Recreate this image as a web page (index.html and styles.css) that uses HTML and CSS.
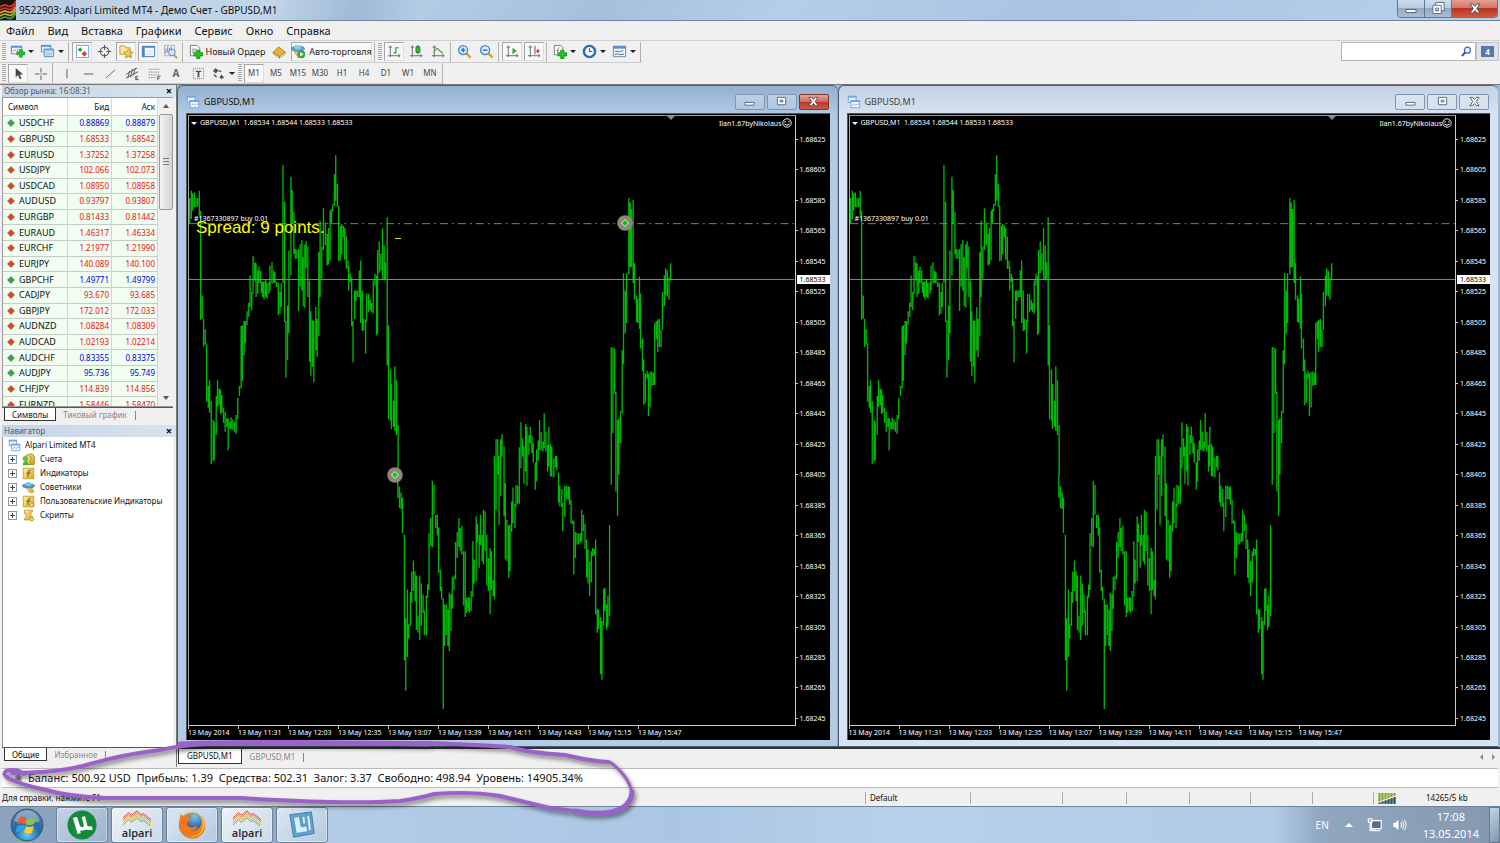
FILE: index.html
```html
<!DOCTYPE html>
<html lang="ru">
<head>
<meta charset="utf-8">
<title>9522903: Alpari Limited MT4</title>
<link rel="stylesheet" href="styles.css">
</head>
<body>
<svg class="sprite" aria-hidden="true">
  <defs>
    <linearGradient id="gold" x1="0" y1="0" x2="1" y2="1"><stop offset="0" stop-color="#fff3a0"/><stop offset="1" stop-color="#d9a520"/></linearGradient>
    <radialGradient id="orbfill" cx=".5" cy=".8" r=".8"><stop offset="0" stop-color="#5fd0f4"/><stop offset=".5" stop-color="#236aa5"/><stop offset="1" stop-color="#5c7f9f"/></radialGradient>
    <radialGradient id="foxfill" cx=".6" cy=".2" r=".9"><stop offset="0" stop-color="#ffd84a"/><stop offset=".5" stop-color="#f58a1c"/><stop offset="1" stop-color="#d2401a"/></radialGradient>
    <radialGradient id="globe" cx=".6" cy=".2" r=".8"><stop offset="0" stop-color="#7cc4ec"/><stop offset="1" stop-color="#1f4f9a"/></radialGradient>
  </defs>
  <symbol id="plus" viewBox="0 0 9 9"><path d="M3 0h3v3h3v3H6v3H3V6H0V3h3z" fill="#23c423" stroke="#0b7d12" stroke-width=".7"/></symbol>
  <symbol id="i-new" viewBox="0 0 16 16"><path d="M1.500 2.500h11v8h-11z" fill="#eaf3fc" stroke="#5b86b5"/><path d="M1 2h12v2H1z" fill="#5b93cc"/><path d="M3 8l2-2 2 2 2-3" fill="none" stroke="#7d9dbf"/><use href="#plus" x="7" y="5.500" width="9" height="9"/></symbol>
  <symbol id="i-profiles" viewBox="0 0 16 16"><path d="M1.500 1.500h10v7h-10z" fill="#e9f3fd" stroke="#4f86c4"/><path d="M1 1h11v2H1z" fill="#5b97d8"/><path d="M4.500 5.500h10v8h-10z" fill="#d5e7fa" stroke="#4f86c4"/><path d="M4 5h11v2H4z" fill="#6ba3de"/><path d="M6 9.500h7M6 11.500h7" stroke="#9ab6d6"/></symbol>
  <symbol id="i-market" viewBox="0 0 16 16"><path d="M1.500 1.500h13v13h-13z" fill="#fff" stroke="#6aa4e0"/><path d="M5.500 3.500L8 6 5.500 8.500 3 6z" fill="#28a428"/><path d="M10 7.500l3 3-3 3-3-3z" fill="#d8412e"/></symbol>
  <symbol id="i-cross" viewBox="0 0 16 16"><circle cx="8" cy="8" r="4.500" fill="none" stroke="#555" stroke-width="1.200"/><path d="M8 1v5M8 10v5M1 8h5M10 8h5" stroke="#555" stroke-width="1.200"/></symbol>
  <symbol id="i-nav" viewBox="0 0 16 16"><path d="M1 2h5l1 2h5v7H1z" fill="#ffe9a0" stroke="#c49b3c"/><path d="M10 5l1.700 3.300 3.500.5-2.600 2.500.6 3.600-3.200-1.700-3.200 1.700.6-3.600-2.600-2.500 3.500-.5z" fill="url(#gold)" stroke="#b98a14" stroke-width=".8"/></symbol>
  <symbol id="i-term" viewBox="0 0 16 16"><path d="M1.500 2.500h13v11h-13z" fill="#f3f8ff" stroke="#3f74bd"/><path d="M1 2h14v2H1zM1 4h3v10H1z" fill="#4e85cc"/><path d="M6 7.500h7M6 10.500h7" stroke="#cddcf0"/></symbol>
  <symbol id="i-test" viewBox="0 0 16 16"><path d="M1.500 1.500h11v11h-11z" fill="#e9eef5" stroke="#a4b3c5"/><path d="M3 10V5M5 9V3M7 8V4M9 9V3" stroke="#5e84b4"/><circle cx="9.500" cy="9" r="3.500" fill="#cfe6fb" fill-opacity=".8" stroke="#5c88b6"/><path d="M12 12l3 3" stroke="#d39b2e" stroke-width="2"/></symbol>
  <symbol id="i-order" viewBox="0 0 16 16"><path d="M2.500 1.500h7l3 3v8h-10z" fill="#fff" stroke="#777"/><path d="M4 5.500h5M4 7.500h6M4 9.500h3" stroke="#888"/><use href="#plus" x="6" y="6" width="10" height="10"/></symbol>
  <symbol id="i-book" viewBox="0 0 16 16"><path d="M1 9l6-6 7 5.500-6 5z" fill="#e9b13a" stroke="#a56f12" stroke-width=".8"/><path d="M1 9l1 2 6 4v-1.800zM8 13.200V15l6-4.500v-2z" fill="#fff0bd" stroke="#a56f12" stroke-width=".7"/></symbol>
  <symbol id="i-auto" viewBox="0 0 16 16"><path d="M2 6l6 9 6-7z" fill="#f2cf4b" stroke="#b68c1f" stroke-width=".6"/><ellipse cx="7.500" cy="5" rx="7" ry="2.800" fill="#5ba4d8" stroke="#2f74a8" stroke-width=".6"/><ellipse cx="7" cy="3.500" rx="3.500" ry="2.500" fill="#8fc9ef"/><circle cx="11" cy="11" r="4.200" fill="#2eab35"/><path d="M9.500 8.600v4.800l4-2.400z" fill="#fff"/></symbol>
  <symbol id="axes" viewBox="0 0 16 16"><path d="M3.500 2v12M1 12.500h13M2 4l1.500-2L5 4M12 11l2 1.500-2 1.500" fill="none" stroke="#666"/></symbol>
  <symbol id="i-bars" viewBox="0 0 16 16"><use href="#axes"/><path d="M9.500 3.500v6.500M9.500 9.500H7M9.500 4h3" stroke="#219a32" stroke-width="1.200"/></symbol>
  <symbol id="i-candle" viewBox="0 0 16 16"><use href="#axes"/><path d="M9.500 1v10" stroke="#14751f"/><path d="M7.500 3h4v6h-4z" fill="#2cc43a" stroke="#14751f"/></symbol>
  <symbol id="i-line" viewBox="0 0 16 16"><use href="#axes"/><path d="M3 9c2-5 4-5 6-2l4 3" fill="none" stroke="#2aa33a" stroke-width="1.200"/></symbol>
  <symbol id="lens" viewBox="0 0 16 16"><path d="M10 10l4.500 4.500" stroke="#d8a328" stroke-width="2.600"/><circle cx="6.500" cy="6.500" r="4.800" fill="#d9edfc" stroke="#3f86ce" stroke-width="1.400"/></symbol>
  <symbol id="i-zin" viewBox="0 0 16 16"><use href="#lens"/><path d="M4 6.500h5M6.500 4v5" stroke="#2566b5" stroke-width="1.400"/></symbol>
  <symbol id="i-zout" viewBox="0 0 16 16"><use href="#lens"/><path d="M4 6.500h5" stroke="#2566b5" stroke-width="1.400"/></symbol>
  <symbol id="i-scroll" viewBox="0 0 16 16"><use href="#axes"/><path d="M8 4l4.500 3.500L8 11z" fill="#26a637"/></symbol>
  <symbol id="i-shift" viewBox="0 0 16 16"><use href="#axes"/><path d="M8.500 2v9" stroke="#555"/><path d="M14 7.500h-3M12 5.500L10 7.500l2 2z" stroke="#c33" fill="#c33" stroke-width=".8"/></symbol>
  <symbol id="i-ind" viewBox="0 0 16 16"><path d="M2.500 1.500h7l2 2v8h-9z" fill="#fff" stroke="#777"/><path d="M6 10V6q0-2 2-2M4.500 7h3" fill="none" stroke="#888"/><use href="#plus" x="6" y="6" width="10" height="10"/></symbol>
  <symbol id="i-clock" viewBox="0 0 16 16"><circle cx="8" cy="8" r="6" fill="#f4faff" stroke="#2c6cb8" stroke-width="2.600"/><path d="M8 4.500V8h3" fill="none" stroke="#555" stroke-width="1.200"/></symbol>
  <symbol id="i-tpl" viewBox="0 0 16 16"><path d="M1.500 2.500h13v11h-13z" fill="#f5f9ff" stroke="#5987ba"/><path d="M1 2h14v3H1z" fill="#5b93cf"/><path d="M3 8.500l3-1 2 1 4-1.500M3 11.500l3-1 3 1 4-1" fill="none" stroke="#557"/></symbol>
  <symbol id="i-cursor" viewBox="0 0 16 16"><path d="M5 2v10l2.500-2.300L9.500 14l1.800-.9-2-4H13z" fill="#444"/></symbol>
  <symbol id="i-hair" viewBox="0 0 16 16"><path d="M8.500 2v5M8.500 10v5M2 8.500h5M10 8.500h5M8 8.500h1" stroke="#555"/></symbol>
  <symbol id="i-vl" viewBox="0 0 16 16"><path d="M8.500 3v10" stroke="#555"/></symbol>
  <symbol id="i-hl" viewBox="0 0 16 16"><path d="M3 8.500h10" stroke="#555"/></symbol>
  <symbol id="i-dl" viewBox="0 0 16 16"><path d="M3 13L13 4" stroke="#666"/></symbol>
  <symbol id="i-chan" viewBox="0 0 16 16"><path d="M1 9L13 2M1 13L14 6M3 13l2-8M6 12l2-9M9 10l2-8M11.500 15v-4h2.500M11.500 13h2M11.500 14.500h3" stroke="#555" fill="none"/></symbol>
  <symbol id="i-fibo" viewBox="0 0 16 16"><path d="M2 3.500h12M2 6.500h12M2 9.500h12M2 12.500h8" stroke="#666" stroke-dasharray="1 1"/><path d="M11.500 15v-4h3M11.500 13h2" stroke="#555" fill="none"/></symbol>
  <symbol id="i-label" viewBox="0 0 16 16"><path d="M2.500 2.500h11v11h-11z" fill="none" stroke="#777" stroke-dasharray="1 1"/><path d="M5 5h6v1.500H9V12H7V6.500H5z" fill="#555"/></symbol>
  <symbol id="i-arrows" viewBox="0 0 16 16"><path d="M5 2l3 3-3 3-3-3zM11 9l3 3-3 2-2-2z" fill="#555"/><path d="M8 5l3 1M6 12l-3-3" stroke="#555" stroke-width="1.400"/></symbol>
  <symbol id="i-arrow" viewBox="0 0 10 10"><path d="M5 .6L9.400 5 5 9.400.6 5z" fill="currentColor" stroke="#3b3b1c" stroke-opacity=".5" stroke-width=".9"/></symbol>
  <symbol id="i-child" viewBox="0 0 16 16"><path d="M1.500 1.500h9v7h-9z" fill="#e6f1fd" stroke="#6b9fdc"/><path d="M1 1h10v2H1z" fill="#6ba4e2"/><path d="M4.500 6.500h10v8h-10z" fill="#f5faff" stroke="#6b9fdc"/><path d="M4 6h11v2H4z" fill="#6ba4e2"/><path d="M6 12l2-2 2 2 2-2 2 1" fill="none" stroke="#7da6d6"/></symbol>
  <symbol id="i-acc" viewBox="0 0 16 16"><path d="M5 3l7-2 3 3v10H5z" fill="url(#gold)" stroke="#8d7413"/><path d="M9 4q4 0 2 4t2 5" fill="none" stroke="#a5841c"/><circle cx="4" cy="7" r="2.800" fill="#6fc43c" stroke="#3e8420" stroke-width=".6"/><path d="M1 15q0-5 3.500-5T8 15z" fill="#55b52c"/></symbol>
  <symbol id="i-f" viewBox="0 0 16 16"><path d="M1.500 1.500h13v13h-13z" fill="url(#gold)" stroke="#c09328"/><path d="M10.500 4Q8 3 7.700 7L7 12M5.500 7.500h5" fill="none" stroke="#6a5418" stroke-width="1.200"/></symbol>
  <symbol id="i-hat" viewBox="0 0 16 16"><path d="M3 7l6 8 5-7z" fill="#f2d05c"/><ellipse cx="8" cy="6" rx="7.500" ry="2.700" fill="#4e9bd0" stroke="#2a6c9e" stroke-width=".7"/><path d="M4 5q1-4 4-4t4 4q-4 2-8 0z" fill="#83c2ea"/><path d="M12 9.500l3 3-3 3-3-3z" fill="#e7b93a" stroke="#a87d17" stroke-width=".7"/></symbol>
  <symbol id="i-fc" viewBox="0 0 16 16"><use href="#i-f"/><path d="M12 9.500l3 3-3 3-3-3z" fill="#f3d264" stroke="#a87d17" stroke-width=".8"/></symbol>
  <symbol id="i-script" viewBox="0 0 16 16"><path d="M3 1.500h10v2h-2v6h2v4H3v-2h2v-6H3z" fill="url(#gold)" stroke="#c09328"/><path d="M12 9.500l3 3-3 3-3-3z" fill="#f3d264" stroke="#a87d17" stroke-width=".8"/></symbol>
  <symbol id="w-min" viewBox="0 0 16 12"><path d="M3 7h10v3H3z" fill="#fff" stroke="#566678" stroke-width="1"/></symbol>
  <symbol id="w-max" viewBox="0 0 16 12"><path d="M3.500 1.500h9v8h-9zM6.500 4.500v2h3v-2z" fill="#fff" fill-rule="evenodd" stroke="#566678"/></symbol>
  <symbol id="w-res" viewBox="0 0 16 14"><path d="M5.500.5h9v9h-9z" fill="#fff" stroke="#566678"/><path d="M2.500 3.500h9v9h-9zM5.500 6.500v3h3v-3z" fill="#fff" fill-rule="evenodd" stroke="#566678"/></symbol>
  <symbol id="w-x" viewBox="0 0 16 12"><path d="M3 1.500h3l2 2.500 2-2.500h3L9.700 6l3.300 4.500h-3L8 8l-2 2.500H3L6.300 6z" fill="#fff" stroke="#4c5666"/></symbol>
  <symbol id="i-alpari" viewBox="0 0 32 18" preserveAspectRatio="none"><g fill="none" stroke-width="1"><path d="M1 9l6-6 3 3 6-5 4 4 3-1 8 7" stroke="#d23c2c"/><path d="M1 11l6-6 3 3 6-5 4 4 3-1 8 7" stroke="#e8752e"/><path d="M1 13l6-6 3 3 6-5 4 4 3-1 8 7" stroke="#edb13a"/><path d="M1 15l6-6 3 3 6-5 4 4 3-1 8 7" stroke="#c3c83a"/><path d="M1 17l6-6 3 3 6-5 4 4 3-1 8 7" stroke="#7fae3a"/></g></symbol>
  <symbol id="i-deal" viewBox="0 0 16 16"><circle cx="8" cy="8" r="7.800" fill="#8f857b"/><path d="M8 4.500L11.500 8 8 11.500 4.500 8z" fill="#12c212" stroke="#c8ffc0"/></symbol>
  <symbol id="bars" viewBox="0 0 1824 1833" preserveAspectRatio="none">
    <g fill="none" stroke="#00b808" stroke-width="4">
      <path transform="translate(-6 -15)" d="M8 262V340M13 240V325M17 248V300M22 245V290M27 262V290M32 262V288M37 240V315M41 300V628M46 555V625M50 625V710M55 657V703M59 700V875M64 828V893M68 810V908M73 873V1063M79 930V1055M82 935V1050M88 858V975M92 810V890M97 835V885M101 838V912M105 855V908M110 893V938M115 905V965M120 925V952M124 925V1022M129 935V958M133 922V958M138 928V960M143 935V965M148 915V972M153 863V928M158 828V858M163 647V835M167 645V812M172 632V735M176 632V700M181 603V645M186 577V620M190 495V590M195 545V600M199 436V550M204 455V510M208 458V560M213 480V550M217 468V518M222 480V518M224 515V548M228 515V560M232 512V568M237 507V560M241 518V565M247 515V550M250 465V540M256 455V520M261 480V518M265 485V518M270 515V530M275 518V615M280 545V610M284 518V590M289 162V518M294 272V635M298 632V803M303 585V750M307 420V668M313 198V495M317 238V340M322 305V430M326 415V445M331 418V445M336 415V602M341 400V528M346 388V540M350 440V588M355 402V592M359 392V472M364 408V560M369 510V755M373 603V797M378 630V770M382 632V817M388 590V720M392 625V740M397 425V678M401 330V560M406 408V505M411 293V418M417 335V405M422 370V465M426 352V462M431 300V450M435 295V340M439 280V302M444 190V285M448 133V270M453 220V288M457 285V452M462 345V450M466 340V430M471 345V380M475 352V448M480 378V475M485 450V475M487 468V540M492 490V515M496 500V648M500 632V757M505 540V625M509 540V572M514 540V560M519 480V560M523 450V638M528 540V662M532 625V660M538 628V730M541 550V635M547 550V605M552 568V600M556 578V605M561 510V610M566 490V525M571 495V675M574 418V670M579 393V488M584 428V480M589 353V508M594 405V510M598 455V508M603 320V765M607 645V928M613 778V932M616 822V958M622 872V950M626 768V962M631 810V975M636 945V1095"/>
      <path transform="translate(606 795)" d="M23 284V355M28 320V385M33 338V388M37 355V460M43 465V843M47 717V935M52 630V833M56 735V778M61 638V740M65 577V670M70 543V635M75 575V665M79 588V752M84 710V760M89 588V782M94 612V740M99 645V700M103 693V768M109 648V768M113 615V655M117 460V632M122 415V500M127 303V503M132 315V405M137 405V445M142 405V468M146 443V580M151 570V635M155 622V660M160 657V990M164 675V800M169 675V768M174 692V800M178 640V815M183 645V755M187 592V688M192 588V632M197 487V600M202 457V535M207 415V502M211 445V515M216 438V525M221 515V678M226 515V713M230 655V700M235 653V695M239 655V700M244 635V695M249 485V652M253 540V612M259 410V605M263 432V487M268 465V565M272 405V498M277 465V545M281 390V555M286 395V515M291 465V618M296 535V635M301 505V705M305 515V632M310 602V650M314 228V660M319 178V390M324 178V285M328 228V435M333 178V348M337 163V230M343 200V410M347 310V540M352 420V545M357 437V595M361 435V575M366 365V458M370 323V430M376 373V445M379 315V380M384 318V372M389 202V372M394 127V265M399 175V230M403 200V312M408 132V275M412 140V318M418 165V225M422 140V190M427 168V220M431 190V248M437 248V330M441 208V305M446 182V243M450 120V210M455 155V212M460 185V215M464 100V205M469 155V215M474 195V275M478 140V260M483 192V290M487 200V290M493 235V293M498 228V262M502 228V272M507 278V368M511 318V380M517 328V382M520 370V455M526 318V412M531 318V358M536 320V360M540 320V375M545 360V432M550 422V433M553 425V585M558 457V535M563 460V495M568 462V495M573 460V488M577 390V485M582 405V455M587 432V508M592 480V595M596 510V612M601 545V650M606 515V608M610 505V530M615 508V528M619 480V705M624 688V760M628 692V750M634 713V885M638 725V902M643 628V738M647 625V695M652 675V752M656 648V742M661 437V710M666 -100V315M671 -98V160M676 -95V40M680 35V335M685 120V408M689 115V285M694 92V190"/>
      <path transform="translate(1176 -75)" d="M129 780V970M133 548V822M138 600V730M142 548V698M149 322V552M153 335V530M157 355V530M162 327V578M166 518V628M172 615V695M176 625V698M181 558V715M184 610V775M190 745V843M194 808V945M199 850V938M204 842V865M208 850V978M213 845V952M218 843V888M223 848V885M227 697V885M232 692V748M236 688V785M241 685V770M246 718V770M250 605V718M256 555V648M260 533V615M265 540V618M270 560V628M275 518V570"/>
    </g>
    <path d="M0 324H1824" stroke="#2fb336" stroke-width="3" stroke-dasharray="24 12 6 12"/>
    <path d="M0 492H1824" stroke="#808898" stroke-width="3"/>
  </symbol>
</svg>

<header class="titlebar">
  <svg class="app-logo" viewBox="0 0 16 20" preserveAspectRatio="none"><path d="M0 0h16v20H0z" fill="#1c120c"/><g fill="none" stroke-width="1.700"><path d="M0 7q4-3 8-1t8-5" stroke="#d53a26"/><path d="M0 10q4-3 8-1t8-5" stroke="#c9392a"/><path d="M0 13q4-3 8-1t8-5" stroke="#e2a13a"/><path d="M0 16q4-3 8-1t8-5" stroke="#a3b93a"/><path d="M0 19q4-3 8-1t8-5" stroke="#4e9a34"/></g></svg>
  <h1 class="title">9522903: Alpari Limited MT4 - Демо Счет - GBPUSD,M1</h1>
  <div class="win-controls">
    <button class="wc" aria-label="Свернуть"><svg><use href="#w-min"/></svg></button>
    <button class="wc" aria-label="Восстановить"><svg><use href="#w-res"/></svg></button>
    <button class="wc wc-close" aria-label="Закрыть"><svg><use href="#w-x"/></svg></button>
  </div>
</header>

<nav class="menu">
  <button>Файл</button><button>Вид</button><button>Вставка</button><button>Графики</button><button>Сервис</button><button>Окно</button><button>Справка</button>
</nav>

<div class="toolrow">
  <div class="toolbar">
    <i class="grip"></i>
    <button class="tb drop" aria-label="Новый график"><svg><use href="#i-new"/></svg></button>
    <button class="tb drop" aria-label="Профили"><svg><use href="#i-profiles"/></svg></button>
    <i class="sep"></i>
    <button class="tb on" aria-label="Обзор рынка"><svg><use href="#i-market"/></svg></button>
    <button class="tb" aria-label="Окно данных"><svg><use href="#i-cross"/></svg></button>
    <button class="tb on" aria-label="Навигатор"><svg><use href="#i-nav"/></svg></button>
    <button class="tb on" aria-label="Терминал"><svg><use href="#i-term"/></svg></button>
    <button class="tb" aria-label="Тестер"><svg><use href="#i-test"/></svg></button>
    <i class="sep"></i>
    <button class="tb wide"><svg><use href="#i-order"/></svg>Новый Ордер</button>
    <button class="tb" aria-label="Редактор"><svg><use href="#i-book"/></svg></button>
    <button class="tb wide on"><svg><use href="#i-auto"/></svg>Авто-торговля</button>
    <i class="sep"></i>
    <i class="grip"></i>
    <button class="tb on" aria-label="Бары"><svg><use href="#i-bars"/></svg></button>
    <button class="tb" aria-label="Свечи"><svg><use href="#i-candle"/></svg></button>
    <button class="tb" aria-label="Линия"><svg><use href="#i-line"/></svg></button>
    <i class="sep"></i>
    <button class="tb" aria-label="Увеличить"><svg><use href="#i-zin"/></svg></button>
    <button class="tb" aria-label="Уменьшить"><svg><use href="#i-zout"/></svg></button>
    <i class="sep"></i>
    <button class="tb on" aria-label="Автопрокрутка"><svg><use href="#i-scroll"/></svg></button>
    <button class="tb on" aria-label="Сдвиг графика"><svg><use href="#i-shift"/></svg></button>
    <i class="sep"></i>
    <button class="tb drop" aria-label="Индикаторы"><svg><use href="#i-ind"/></svg></button>
    <button class="tb drop" aria-label="Периоды"><svg><use href="#i-clock"/></svg></button>
    <button class="tb drop" aria-label="Шаблоны"><svg><use href="#i-tpl"/></svg></button>
    <i class="sep"></i>
  </div>
  <div class="search">
    <input type="text" aria-label="Поиск">
    <svg class="search-icon" viewBox="0 0 12 12"><circle cx="7" cy="4.500" r="3.300" fill="#eef4ff" stroke="#3b62c4" stroke-width="1.300"/><path d="M4.500 7L1 11" stroke="#2b48b8" stroke-width="2"/></svg>
    <button class="notify"><span class="bubble">4</span></button>
  </div>
</div>
<div class="toolrow lower">
  <div class="toolbar">
    <i class="grip"></i>
    <button class="tb on" aria-label="Курсор"><svg><use href="#i-cursor"/></svg></button>
    <button class="tb" aria-label="Перекрестие"><svg><use href="#i-hair"/></svg></button>
    <i class="sep"></i>
    <button class="tb" aria-label="Вертикальная линия"><svg><use href="#i-vl"/></svg></button>
    <button class="tb" aria-label="Горизонтальная линия"><svg><use href="#i-hl"/></svg></button>
    <button class="tb" aria-label="Трендовая линия"><svg><use href="#i-dl"/></svg></button>
    <button class="tb" aria-label="Канал"><svg><use href="#i-chan"/></svg></button>
    <button class="tb" aria-label="Фибоначчи"><svg><use href="#i-fibo"/></svg></button>
    <button class="tb letter">A</button>
    <button class="tb" aria-label="Метка"><svg><use href="#i-label"/></svg></button>
    <button class="tb drop" aria-label="Стрелки"><svg><use href="#i-arrows"/></svg></button>
    <i class="grip"></i>
    <button class="tb on">M1</button><button class="tb">M5</button><button class="tb">M15</button><button class="tb">M30</button><button class="tb">H1</button><button class="tb">H4</button><button class="tb">D1</button><button class="tb">W1</button><button class="tb">MN</button>
    <i class="sep"></i>
  </div>
</div>

<main class="work">
  <aside class="side">
    <section class="panel market">
      <h2 class="panel-title">Обзор рынка: 16:08:31<button class="x" aria-label="Закрыть">×</button></h2>
      <div class="market-body">
        <div class="quotes-clip">
          <table class="quotes">
            <thead><tr><th>Символ</th><th>Бид</th><th>Аск</th></tr></thead>
            <tbody id="quotes"></tbody>
          </table>
        </div>
        <div class="vscroll"><span class="up"></span><span class="thumb"></span><span class="down"></span></div>
      </div>
      <div class="tabs"><button class="tab active">Символы</button><button class="tab">Тиковый график</button></div>
    </section>
    <section class="panel navigator">
      <h2 class="panel-title">Навигатор<button class="x" aria-label="Закрыть">×</button></h2>
      <ul class="tree">
        <li class="root"><svg><use href="#i-child"/></svg>Alpari Limited MT4</li>
        <li><b class="exp"></b><svg><use href="#i-acc"/></svg>Счета</li>
        <li><b class="exp"></b><svg><use href="#i-f"/></svg>Индикаторы</li>
        <li><b class="exp"></b><svg><use href="#i-hat"/></svg>Советники</li>
        <li><b class="exp"></b><svg><use href="#i-fc"/></svg>Пользовательские Индикаторы</li>
        <li><b class="exp"></b><svg><use href="#i-script"/></svg>Скрипты</li>
      </ul>
      <div class="tabs"><button class="tab active">Общие</button><button class="tab">Избранное</button></div>
    </section>
  </aside>

  <section class="mdi">
    <div class="windows">
      <article class="win active">
        <header class="win-title"><svg class="win-icon"><use href="#i-child"/></svg><span>GBPUSD,M1</span>
          <div class="win-btns"><button aria-label="Свернуть"><svg><use href="#w-min"/></svg></button><button aria-label="Развернуть"><svg><use href="#w-max"/></svg></button><button class="close" aria-label="Закрыть"><svg><use href="#w-x"/></svg></button></div>
        </header>
        <div class="chart">
          <div class="plot">
            <svg class="bars"><use href="#bars"/></svg>
            <span class="ohlc">GBPUSD,M1&nbsp; 1.68534 1.68544 1.68533 1.68533</span>
            <span class="expert">Ilan1.67byNikolaus<svg viewBox="0 0 10 10"><circle cx="5" cy="5" r="4.200" fill="none" stroke="#fff" stroke-width=".9"/><path d="M3 3v1.500M7 3v1.500M2.500 6Q5 8.500 7.500 6" fill="none" stroke="#fff"/></svg></span>
            <i class="shift-mark"></i>
            <span class="order">#1367330897 buy 0.01</span>
            <span class="spread">Spread: 9 points.</span>
            <i class="dash"></i>
            <svg class="deal open"><use href="#i-deal"/></svg>
            <svg class="deal last"><use href="#i-deal"/></svg>
          </div>
          <div class="prices"></div>
          <div class="times"></div>
        </div>
      </article>
      <article class="win">
        <header class="win-title"><svg class="win-icon"><use href="#i-child"/></svg><span>GBPUSD,M1</span>
          <div class="win-btns"><button aria-label="Свернуть"><svg><use href="#w-min"/></svg></button><button aria-label="Развернуть"><svg><use href="#w-max"/></svg></button><button aria-label="Закрыть"><svg><use href="#w-x"/></svg></button></div>
        </header>
        <div class="chart">
          <div class="plot">
            <svg class="bars"><use href="#bars"/></svg>
            <span class="ohlc">GBPUSD,M1&nbsp; 1.68534 1.68544 1.68533 1.68533</span>
            <span class="expert">Ilan1.67byNikolaus<svg viewBox="0 0 10 10"><circle cx="5" cy="5" r="4.200" fill="none" stroke="#fff" stroke-width=".9"/><path d="M3 3v1.500M7 3v1.500M2.500 6Q5 8.500 7.500 6" fill="none" stroke="#fff"/></svg></span>
            <i class="shift-mark"></i>
            <span class="order">#1367330897 buy 0.01</span>
          </div>
          <div class="prices"></div>
          <div class="times"></div>
        </div>
      </article>
    </div>
    <div class="chart-tabs"><button class="tab active">GBPUSD,M1</button><button class="tab">GBPUSD,M1</button><span class="pager"><i class="prev"></i><i class="next"></i></span></div>
  </section>
</main>

<div class="balance"><i class="dot"></i><span>Баланс: 500.92 USD&nbsp; Прибыль: 1.39&nbsp; Средства: 502.31&nbsp; Залог: 3.37&nbsp; Свободно: 498.94&nbsp; Уровень: 14905.34%</span></div>

<footer class="status">
  <span>Для справки, нажмите F1</span><span>Default</span><span></span><span></span><span></span><span></span><span></span><span></span>
  <span class="traffic"><svg viewBox="0 0 19 11"><path d="M1.500 0v10M4.500 0v10M7.500 0v10M10.500 0v10M13.500 0v10M16.500 0v10" stroke="#86a52c" stroke-width="2.200"/><path d="M1.500 9v2M4.500 8v3M7.500 7v4M10.500 6v5M13.500 5v6M16.500 4v7" stroke="#27566f" stroke-width="2.200"/><path d="M0 9.500L18 3" stroke="#fff"/></svg>14265/5 kb</span>
</footer>

<div class="taskbar">
  <button class="start" aria-label="Пуск"><svg viewBox="0 0 34 34"><circle cx="17" cy="17" r="16" fill="url(#orbfill)" stroke="#38536e"/><path d="M4 13Q8 2 17 2t13 11Q18 18 4 13z" fill="#fff" opacity=".35"/><path d="M9 10q4-2.500 7-.5l-1.500 6.500q-3-1.500-7 .5z" fill="#ee5b28"/><path d="M17.500 10q4 2 8-.5L24 16q-4 2-8 .2z" fill="#8cc63e"/><path d="M7 18q4-2 7.200-.3L12.500 24q-3-1.500-7 .5z" fill="#2ea3e3"/><path d="M15.800 18.200q4 1.800 8-.2L22 24.700q-4 2-8-.2z" fill="#fdc92e"/></svg></button>
  <button class="task" aria-label="uTorrent"><svg viewBox="0 0 32 32"><circle cx="16" cy="16" r="15.500" fill="#138a3c"/><path d="M8 8l5 17M9 8l3 9q2 4 5.500 3t2-5L17.500 7M19 16q2 5 8 3" fill="none" stroke="#fff" stroke-width="3.600"/></svg></button>
  <button class="task lit alpari"><svg><use href="#i-alpari"/></svg><span>alpari</span></button>
  <button class="task lit" aria-label="Firefox"><svg viewBox="0 0 32 32"><circle cx="16" cy="16" r="14" fill="url(#foxfill)"/><circle cx="17" cy="12.500" r="9.500" fill="url(#globe)"/><path d="M3 9l1-5 3 4q3-2 6-1l2 3-4 3q-1 3 1 4 3 3 6 1 2-1 4 0-2 4-7 4 6 3 11-2 3-3 2-9 4 7 0 13-6 8-14 6Q3 27 2.500 18 2 12 3 9z" fill="#ee7a1b"/><path d="M27 8q5 8 0 15t-13 5q9 0 12-6t1-14z" fill="#ffd13d"/></svg></button>
  <button class="task lit alpari"><svg><use href="#i-alpari"/></svg><span>alpari</span></button>
  <button class="task lit" aria-label="Приложение"><svg viewBox="0 0 32 32"><path d="M3 5l23-3 3 23-22 4z" fill="#5fa3cb" stroke="#3b7fa9"/><path d="M7 8l6-1 2 11 6-1 1 6-12 2zM16 7l3-.4 1 8-3 .4zM21 6l3-.4 2 16-3 .4z" fill="#d8eefa" stroke="#4484ab" stroke-width=".6"/></svg></button>
  <div class="tray">
    <span class="lang">EN</span>
    <i class="tray-up"></i>
    <svg class="tray-icon" viewBox="0 0 18 18"><path d="M5 4h11v9H5z" fill="#566f89" stroke="#fff" stroke-width="1.300"/><path d="M1.500 2h4v4h-4zM3.500 6v9h6M7 15.500h8" fill="none" stroke="#fff" stroke-width="1.300"/></svg>
    <svg class="tray-icon" viewBox="0 0 18 18"><path d="M2 6h3l4-4v14l-4-4H2z" fill="#fff" stroke="#64788d" stroke-width=".7"/><path d="M11 6q2 3 0 6M13 4.500q3 4.500 0 9M15 3q4 6 0 12" fill="none" stroke="#fff" stroke-width="1.100"/></svg>
    <div class="clock"><span>17:08</span><span>13.05.2014</span></div>
    <button class="desktop" aria-label="Свернуть все окна"></button>
  </div>
</div>

<svg class="scribble" viewBox="0 0 650 90" aria-hidden="true"><g fill="none" stroke="#9a62c8" stroke-linecap="round" stroke-linejoin="round"><path d="M24 39Q16 33 6 36Q2 39 8 43Q22 50 42 54Q70 62 105 63L240 63Q290 66 330 67T400 66Q420 63 434 59Q470 56 500 61Q525 67 550 73L575 76" stroke-width="4"/><path d="M575 76Q595 80 612 77Q631 72 632 57" stroke-width="5"/><path d="M632 59Q630 42 610 27" stroke-width="3"/><path d="M12 38Q60 38 90 29Q125 19 160 15Q190 8 240 8L430 8Q480 10 510 12Q530 18 565 20Q590 26 608 27" stroke-width="4"/><path d="M180 9Q240 6 430 9" stroke-width="5"/></g></svg>
<script src="script.js"></script>
</body>
</html>
```
FILE: styles.css
```css
* { box-sizing: border-box; }
body {
  margin: 0; height: 100vh; display: flex; flex-direction: column; overflow: hidden;
  background: #f0f0f0; color: #111; font: 9px/14px "Noto Sans", "Open Sans", sans-serif;
}
button { font: inherit; color: inherit; border: 0; padding: 0; margin: 0; background: none; }
h1, h2, ul { margin: 0; padding: 0; font-weight: normal; }
svg { display: block; flex: none; }
.sprite { position: absolute; width: 0; height: 0; }

.titlebar { display: flex; align-items: center; height: 21px; flex: none; border-bottom: 1px solid #6c8296;
  background: linear-gradient(115deg, #b9cde2 0, #c3d5e8 18%, #9fbad6 24%, #b4cbe4 28%, #a6c0dc 40%, #b5cde8 52%, #a9c4e2 70%, #b8d0ea 100%); }
.app-logo { width: 16px; height: 20px; }
.title { flex: 1; padding-left: 3px; font-size: 10px; line-height: 20px; }
.win-controls { display: flex; align-self: flex-start; margin-right: 2px; border: 1px solid #5f7891; border-top: 0; border-radius: 0 0 4px 4px; overflow: hidden; }
.wc { width: 27px; height: 17px; display: grid; place-items: center; border-right: 1px solid #5f7891; background: linear-gradient(#cfdded, #b9cbdf 48%, #93aac4 50%, #a9bfd8); }
.wc svg { width: 16px; height: 13px; }
.wc-close { width: 45px; border-right: 0; background: linear-gradient(#e2a093, #d47463 48%, #b83420 50%, #cf5a3d); }

.menu { display: flex; align-items: center; gap: 13px; height: 20px; flex: none; padding-left: 6px; font-size: 11px; border-bottom: 1px solid #d0d0d0; }
.toolrow { display: flex; justify-content: space-between; height: 22px; flex: none; }
.toolrow.lower { height: 21px; }
.toolbar { display: flex; align-items: center; gap: 2px; padding-left: 2px; border-bottom: 1px solid #ccc; }
.grip { width: 4px; height: 18px; background: repeating-linear-gradient(#aaa 0 1px, transparent 1px 2px); }
.sep { width: 2px; height: 20px; border-left: 1px solid #b3b3b3; }
.tb { width: 20px; height: 19px; display: flex; align-items: center; justify-content: center; gap: 3px; white-space: nowrap; color: #222; }
.tb svg { width: 15px; height: 15px; }
.tb.on { background: #f8f8f8; border: 1px solid #ddd; border-top-color: #a5a5a5; border-left-color: #a5a5a5; }
.tb.drop { width: 28px; }
.tb.drop::after { content: ""; border: 3px solid transparent; border-top-color: #222; border-bottom: 0; }
.tb.wide { width: 81px; }
.lower .toolbar { gap: 2px; }
.lower .tb { font-size: 8px; color: #444; }
.lower .tb.drop { width: 26px; }
.lower .tb.letter { font-size: 10px; font-weight: bold; color: #666; }
.search { position: relative; display: flex; align-items: center; height: 20px; margin-right: 1px; }
.search input { width: 135px; height: 19px; border: 1px solid #b5b5b5; background: #fff; padding: 0 20px 0 4px; }
.search-icon { position: absolute; right: 27px; width: 11px; height: 11px; }
.notify { width: 23px; height: 19px; display: grid; place-items: center; border: 1px solid #c4c4c4; background: #dfe2e6; }
.bubble { width: 13px; height: 11px; line-height: 11px; font-size: 8px; font-weight: bold; color: #fff; background: #5877ad; }

.work { display: flex; flex: 1; min-height: 0; border-top: 1px solid #777; }
.side { width: 176px; flex: none; display: flex; flex-direction: column; gap: 4px; padding-left: 2px; }
.panel { display: flex; flex-direction: column; }
.market { height: 336px; }
.navigator { flex: 1; padding-bottom: 6px; }
.panel-title { display: flex; justify-content: space-between; align-items: center; height: 12px; flex: none; padding: 0 4px 0 2px; font-size: 8px; color: #4b5a6b; background: linear-gradient(90deg, #c6d5e4, #d6e3f1); }
.x { color: #000; font: bold 11px/12px "Noto Sans", sans-serif; }
.market-body { display: flex; flex: 1; min-height: 0; margin-right: 3px; border: 1px solid #999; border-right: 0; background: #fff; }
.quotes-clip { flex: 1; overflow: hidden; }
.quotes { width: 100%; height: 315px; border-collapse: separate; border-spacing: 0; table-layout: fixed; line-height: 12px; }
.quotes th, .quotes td { padding: 0 2px 0 0; text-align: right; font-weight: normal; border-right: 1px solid #cdd8cd; }
.quotes th { height: 18px; font-size: 8px; border-color: #ddd; border-bottom: 1px solid #ccc; }
.quotes th:first-child { width: 65px; text-align: left; padding-left: 5px; }
.quotes th:nth-child(2) { width: 44px; }
.quotes td { background: #f0fdf0; border-bottom: 1px solid #c8ccc8; font-size: 8px; color: #e11; }
.quotes td:first-child { color: #111; text-align: left; }
.quotes .up td { color: #00d; }
.quotes .up td:first-child { color: #111; }
.sym { display: flex; align-items: center; gap: 4px; padding-left: 4px; font-size: 9px; }
.sym svg { width: 8px; height: 8px; color: #e8401f; }
.up .sym svg { color: #2faa3d; }
.vscroll { width: 15px; display: flex; flex-direction: column; align-items: center; background: #f0f0f0; }
.vscroll .up { margin: 6px 0; border: 3px solid transparent; border-bottom: 4px solid #555; border-top: 0; }
.vscroll .thumb { width: 14px; height: 96px; border: 1px solid #999; border-radius: 2px; background: repeating-linear-gradient(#777 0 1px, transparent 1px 3px) center / 6px 8px no-repeat, linear-gradient(90deg, #f3f3f3, #d3d3d5); }
.vscroll .down { margin: auto 0 6px; border: 3px solid transparent; border-top: 4px solid #555; border-bottom: 0; }
.tabs { display: flex; height: 14px; flex: none; margin-right: 3px; padding-left: 2px; border-top: 1px solid #555; }
.tab { padding: 0 7px; color: #888; line-height: 13px; }
.tab::after { content: ""; display: inline-block; width: 1px; height: 9px; margin-left: 8px; background: #888; vertical-align: middle; }
.tab.active { color: #111; background: #fff; border: 1px solid #333; border-top: 0; }
.tab.active::after { display: none; }
.tabs .tab { font-size: 8px; }
.tree { flex: 1; margin-right: 3px; padding: 1px 0 0 5px; list-style: none; background: #fff; border-left: 1px solid #999; overflow: hidden; white-space: nowrap; }
.tree li { display: flex; align-items: center; height: 14px; gap: 5px; font-size: 8px; }
.tree svg { width: 13px; height: 13px; }
.tree .root { gap: 4px; }
.exp { width: 9px; height: 9px; border: 1px solid #8a97ad; background: linear-gradient(#345, #345) center / 5px 1px no-repeat, linear-gradient(#345, #345) center / 1px 5px no-repeat, #fff; }

.mdi { flex: 1; min-width: 0; display: flex; flex-direction: column; border-left: 1px solid #777; }
.windows { flex: 1; min-height: 0; display: flex; padding-right: 2px; background: #a0bbd8; border-bottom: 2px solid #333; }
.win { flex: 1; min-width: 0; display: flex; flex-direction: column; padding: 0 8px 6px 8px; border: 1px solid #4c5c6c; border-right-width: 0; border-radius: 6px 6px 0 0; background: linear-gradient(#c3d3e3, #d6e3f2 30px); }
.win.active { background: linear-gradient(#94b0d2, #b2cbe6 30px); box-shadow: inset -1px 0 #4fc4dc; }
.win-title { display: flex; align-items: center; gap: 4px; height: 27px; flex: none; padding-top: 4px; }
.win:not(.active) .win-title { color: #444; }
.win-icon { width: 14px; height: 14px; }
.win-btns { display: flex; gap: 2px; margin: 0 1px 0 auto; }
.win-btns button { width: 30px; height: 16px; display: grid; place-items: center; border: 1px solid #7f94ad; border-radius: 2px; background: linear-gradient(#ffffff55, #ffffff11); }
.win-btns .close { border-color: #7c332a; background: linear-gradient(#e3a79c, #cf6955 48%, #b5382a 50%, #cc5d47); }
.win-btns svg { width: 15px; height: 11px; }
.chart { flex: 1; min-height: 0; display: grid; grid-template: 1fr 14px / 1fr 34px; padding: 1px 0 0 1px; background: #000; color: #fff; font-size: 7px; line-height: 9px; border: 1px solid #555; border-width: 1px 0 0 1px; }
.plot { position: relative; border: 1px solid #bbb; border-color: #999 #ccc #ccc #aaa; }
.bars { position: absolute; inset: 0; width: 100%; height: 100%; }
.ohlc { position: absolute; left: 11px; top: 2px; }
.ohlc::before { content: ""; position: absolute; left: -9px; top: 4px; border: 3px solid transparent; border-top-color: #fff; border-bottom: 0; }
.expert { position: absolute; right: 3px; top: 2px; display: flex; align-items: center; }
.expert svg { width: 10px; height: 10px; }
.shift-mark { position: absolute; left: 79%; top: 0; border: 4px solid transparent; border-top-color: #889; border-bottom: 0; }
.order { position: absolute; left: 5px; top: 98px; }
.spread { position: absolute; left: 7px; top: 102px; font: 17px/20px "Liberation Sans", sans-serif; color: #ff0; }
.dash { position: absolute; left: 34%; top: 20%; width: 6px; height: 1px; background: #dd2; }
.deal { position: absolute; width: 16px; height: 16px; transform: translate(-50%, -50%); }
.deal.open { left: 34%; top: 59%; }
.deal.last { left: 72%; top: 107px; }
.prices { position: relative; display: flex; flex-direction: column; justify-content: space-between; padding: 20px 0 3px; }
.prices span { padding-left: 4px; background: linear-gradient(#ccc, #ccc) left center / 2px 1px no-repeat; }
.prices .now { position: absolute; left: 1px; right: 0; top: 160px; padding-left: 3px; color: #000; background: #fff; }
.times { grid-column: 1 / 3; display: flex; overflow: hidden; white-space: nowrap; line-height: 14px; }
.times span { width: 50px; flex: none; background: linear-gradient(#ccc, #ccc) left top / 1px 3px no-repeat; }
.chart-tabs { display: flex; height: 15px; margin-bottom: 3px; flex: none; padding-left: 1px; font-size: 8px; }
.chart-tabs .tab { padding: 0 8px; line-height: 14px; }
.pager { margin: 5px 5px 0 auto; display: flex; gap: 9px; }
.prev, .next { border: 3px solid transparent; border-left-width: 0; border-right: 3px solid #888; height: 6px; }
.next { border-width: 3px 0 3px 3px; border-left-color: #888; }

.balance { display: flex; align-items: center; gap: 6px; height: 20px; flex: none; margin: 1px 2px 2px; padding-left: 13px; font-size: 11px; background: #fff; border: 1px solid #bbb; border-width: 1px 0; }
.dot { width: 7px; height: 7px; border-radius: 50%; border: 2px solid #aaa; background: #777; }
.status { display: grid; grid-template-columns: 1fr 105px 92px 64px 63px 61px 62px 61px 127px; align-items: center; height: 16px; flex: none; font-size: 8px; }
.status span { height: 12px; line-height: 12px; padding-left: 4px; border-left: 1px solid #aaa; }
.status span:first-child { border: 0; padding-left: 2px; }
.status .traffic { display: flex; gap: 29px; align-items: center; }
.traffic svg { width: 19px; height: 11px; }

.taskbar { display: flex; align-items: stretch; gap: 3px; height: 37px; flex: none; border-top: 1px solid #6f8498; background: linear-gradient(90deg, #8aa2bd 0, #93abc5 20%, #b3cce7 22%, #abc6e4 45%, #b8d1ea 60%, #b2cbe6 85%, #90a7c0 88%, #8499b0 100%); }
.start { width: 53px; display: grid; place-items: center; }
.start svg { width: 34px; height: 34px; }
.task { width: 52px; display: grid; place-items: center; border: 1px solid #6c839c; border-radius: 3px; background: linear-gradient(135deg, #c4d3e4, #9bb3cd); box-shadow: inset 0 0 0 1px #ffffff66; }
.task.lit { background: linear-gradient(135deg, #dbe6f2, #b4cae1); }
.task svg { width: 30px; height: 30px; }
.task.alpari { align-content: center; background: linear-gradient(135deg, #edf3f8, #c9dae9); }
.alpari svg { width: 30px; height: 16px; }
.alpari span { font: 600 11px/14px "Open Sans", sans-serif; color: #1d2731; }
.tray { display: flex; align-items: center; gap: 8px; margin-left: auto; color: #fff; font-size: 11px; }
.lang { margin-right: 8px; font-size: 10px; }
.tray-up { margin-right: 6px; border: 4px solid transparent; border-bottom-color: #fff; border-top: 0; }
.tray-icon { width: 16px; height: 16px; }
.clock { display: flex; flex-direction: column; align-items: center; margin-left: 8px; line-height: 17px; }
.desktop { align-self: stretch; width: 11px; margin-left: 2px; border: 1px solid #637a93; background: linear-gradient(135deg, #c7d5e3, #7f95ad); }
.scribble { position: fixed; left: 0; bottom: 18px; width: 650px; height: 90px; pointer-events: none; overflow: visible; filter: drop-shadow(2px 3px 2px #0007); }
```
FILE: script.js
```js
const quotes = [
  ['USDCHF', '0.88869', '0.88879', 1], ['GBPUSD', '1.68533', '1.68542'], ['EURUSD', '1.37252', '1.37258'],
  ['USDJPY', '102.066', '102.073'], ['USDCAD', '1.08950', '1.08958'], ['AUDUSD', '0.93797', '0.93807'],
  ['EURGBP', '0.81433', '0.81442'], ['EURAUD', '1.46317', '1.46334'], ['EURCHF', '1.21977', '1.21990'],
  ['EURJPY', '140.089', '140.100'], ['GBPCHF', '1.49771', '1.49799', 1], ['CADJPY', '93.670', '93.685'],
  ['GBPJPY', '172.012', '172.033'], ['AUDNZD', '1.08284', '1.08309'], ['AUDCAD', '1.02193', '1.02214'],
  ['AUDCHF', '0.83355', '0.83375', 1], ['AUDJPY', '95.736', '95.749', 1], ['CHFJPY', '114.839', '114.856'],
  ['EURNZD', '1.58446', '1.58470']
];
document.getElementById('quotes').innerHTML = quotes.map(([s, bid, ask, up]) =>
  `<tr class="${up ? 'up' : ''}"><td><span class="sym"><svg><use href="#i-arrow"/></svg>${s}</span></td><td>${bid}</td><td>${ask}</td></tr>`
).join('');

const levels = Array.from({ length: 20 }, (_, i) => `<span>1.68${625 - i * 20}</span>`).join('');
document.querySelectorAll('.prices').forEach(el => {
  el.innerHTML = levels + '<span class="now">1.68533</span>';
});

const times = ['2014', '11:31', '12:03', '12:35', '13:07', '13:39', '14:11', '14:43', '15:15', '15:47'];
document.querySelectorAll('.times').forEach(el => {
  el.innerHTML = times.map(t => `<span>13 May ${t}</span>`).join('');
});
```
